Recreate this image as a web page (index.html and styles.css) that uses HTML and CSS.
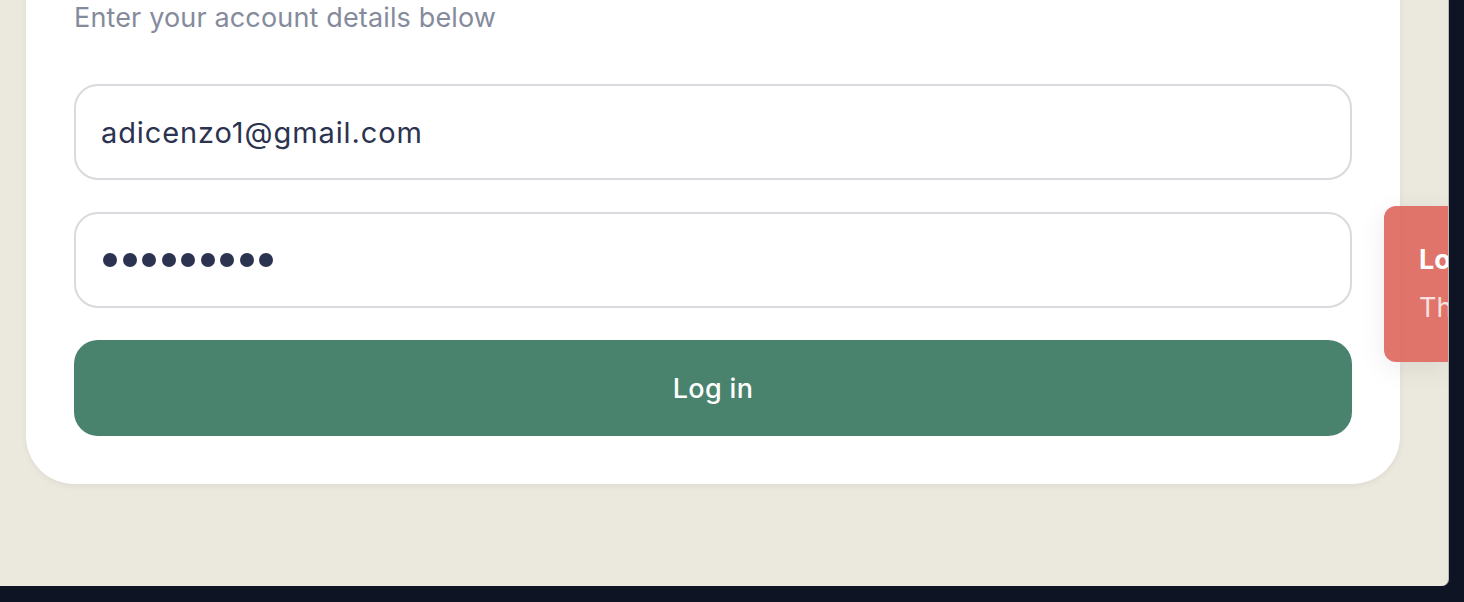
FILE: index.html
```html
<!DOCTYPE html>
<html lang="en">
<head>
<meta charset="utf-8">
<title>Log in</title>
<link rel="stylesheet" href="styles.css">
</head>
<body>
<div class="panel">
  <main class="card">
    <p class="subtitle">Enter your account details below</p>
    <form class="form">
      <div class="field">adicenzo1@gmail.com</div>
      <div class="field dots" aria-label="password">
        <span></span><span></span><span></span><span></span><span></span><span></span><span></span><span></span><span></span>
      </div>
      <button type="button" class="btn">Log in</button>
    </form>
  </main>
  <div class="toast" role="alert">
    <div class="toast-title">Lo</div>
    <div class="toast-text">Th</div>
  </div>
</div>
</body>
</html>
```

FILE: styles.css
```css
* { box-sizing: border-box; }
html, body { margin: 0; padding: 0; }
body {
  background: #0f1425;
  font-family: Inter, "Noto Sans", sans-serif;
  width: 1464px;
  height: 602px;
  overflow: hidden;
}
.panel {
  position: relative;
  width: 1449px;
  height: 586px;
  background: #ebe8de;
  border-right: 1px solid #b9b8b4;
  border-bottom-right-radius: 7px;
  overflow: hidden;
  padding-left: 26px;
}
.card {
  width: 1374px;
  margin-top: -46px;
  background: #fff;
  border-radius: 48px;
  padding: 48px 48px 48px 48px;
  box-shadow: 0 2px 6px rgba(0, 0, 0, 0.06);
}
.subtitle {
  margin: 0;
  font-size: 27px;
  line-height: 32px;
  color: #858b9c;
  letter-spacing: 0.15px;
}
.form {
  display: flex;
  flex-direction: column;
  gap: 32px;
  margin-top: 50px;
}
.field {
  height: 96px;
  border: 2px solid #d9d9de;
  border-radius: 24px;
  padding: 0 24px 0 25px;
  display: flex;
  align-items: center;
  font-size: 29px;
  color: #2b3350;
  letter-spacing: 0.9px;
}
.dots {
  gap: 5.5px;
  padding-left: 27px;
}
.dots span {
  width: 14px;
  height: 14px;
  border-radius: 50%;
  background: #2b3350;
}
.btn {
  height: 96px;
  border: 0;
  border-radius: 24px;
  background: #49826d;
  color: #fff;
  font-family: inherit;
  font-size: 27px;
  letter-spacing: 0.35px;
  font-weight: 500;
  padding: 0;
}
.toast {
  position: absolute;
  left: 1384px;
  top: 206px;
  width: 64px;
  height: 156px;
  border-radius: 12px 0 0 12px;
  background: rgba(222, 104, 96, 0.92);
  box-shadow: 0 6px 28px rgba(0, 0, 0, 0.08);
  padding: 36px 0 0 35px;
  color: #fff;
  white-space: nowrap;
  overflow: hidden;
}
.toast-title {
  font-size: 27px;
  font-weight: 700;
  line-height: 36px;
}
.toast-text {
  font-size: 27px;
  line-height: 36px;
  margin-top: 12px;
  color: rgba(255, 255, 255, 0.8);
}
```
